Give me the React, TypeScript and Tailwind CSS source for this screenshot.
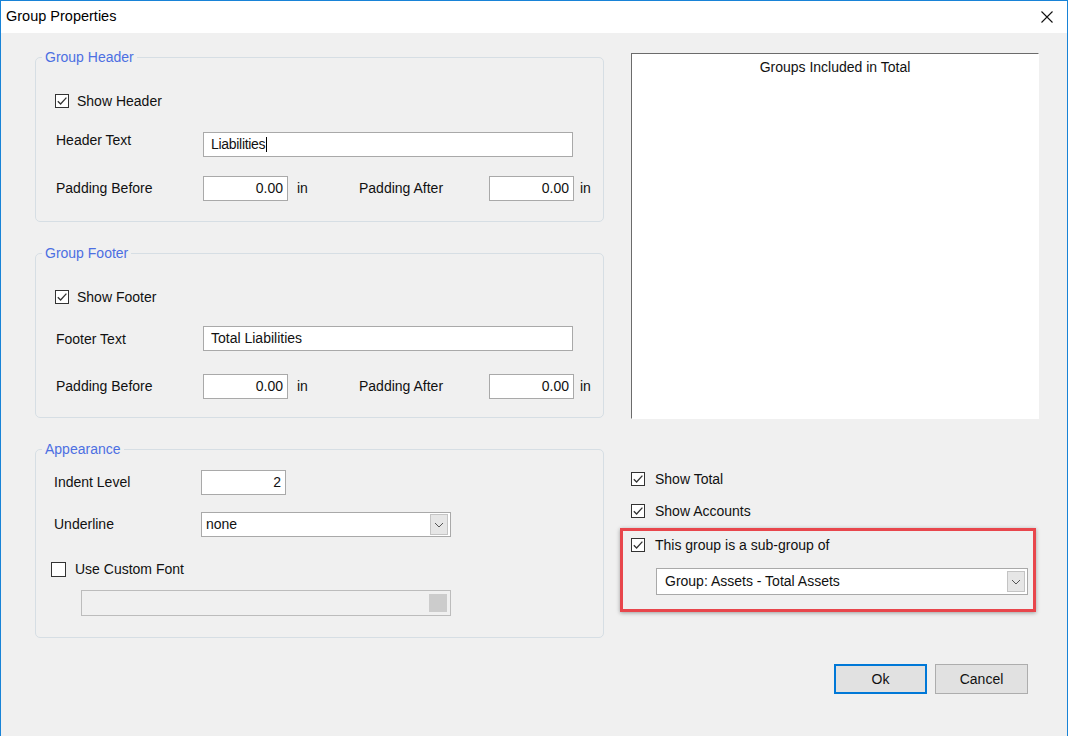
import React from "react";

function Check({ checked }: { checked: boolean }) {
  return (
    <span className="flex h-[14px] w-[14px] shrink-0 items-center justify-center border border-[#333333] bg-white">
      {checked && (
        <svg width="12" height="12" viewBox="0 0 12 12">
          <path d="M1.8 6.2 L4.6 9 L10.4 2.6" fill="none" stroke="#333333" strokeWidth="1.3" />
        </svg>
      )}
    </span>
  );
}

function Chevron() {
  return (
    <span className="mr-[2px] flex h-[21px] w-[18px] items-center justify-center border border-[#c4c4c4] bg-[#e6e6e6]">
      <svg width="10" height="6" viewBox="0 0 10 6">
        <path d="M1 1 L5 5 L9 1" fill="none" stroke="#555" strokeWidth="1" />
      </svg>
    </span>
  );
}

function NumBox({ value, w = "w-[85px]" }: { value: string; w?: string }) {
  return (
    <div className={`${w} flex h-[25px] items-center justify-end border border-[#a9a9a9] bg-white pr-[4px]`}>
      {value}
    </div>
  );
}

function Legend({ text, ml }: { text: string; ml: string }) {
  return <legend className={`${ml} px-[3px] leading-[16px] text-[#4c6fe2]`}>{text}</legend>;
}

function SectionGroup({
  title,
  checkLabel,
  textLabel,
  textValue,
  caret,
  gapB,
  gapC,
  labelMt,
}: {
  title: string;
  checkLabel: string;
  textLabel: string;
  textValue: string;
  caret?: boolean;
  gapB: string;
  gapC: string;
  labelMt: string;
}) {
  return (
    <fieldset className="h-[173px] rounded-[5px] border border-[#d6dee4] pl-[19px]">
      <Legend text={title} ml="-ml-[13px]" />
      <div className="mt-[24px] flex h-[24px] items-center gap-[8px]">
        <Check checked />
        <span>{checkLabel}</span>
      </div>
      <div className={`${gapB} flex h-[25px] items-start`}>
        <span className={`${labelMt} w-[148px] pl-[1px] leading-[16px]`}>{textLabel}</span>
        <div className="flex h-[25px] w-[370px] items-center border border-[#a9a9a9] bg-white pl-[7px]">
          <span className={caret ? "tracking-[-0.3px]" : ""}>{textValue}</span>
          {caret && <span className="ml-[1px] h-[15px] w-[1px] bg-black" />}
        </div>
      </div>
      <div className={`${gapC} flex h-[25px] items-center`}>
        <span className="w-[148px] pl-[1px]">Padding Before</span>
        <NumBox value="0.00" />
        <span className="ml-[9px] w-[62px]">in</span>
        <span className="w-[130px]">Padding After</span>
        <NumBox value="0.00" />
        <span className="ml-[6px]">in</span>
      </div>
    </fieldset>
  );
}

export default function App() {
  return (
    <div className="flex h-[736px] w-[1068px] flex-col border-x border-t border-[#1883d7] bg-[#f0f0f0] font-['Liberation_Sans',Arial,sans-serif] text-[14px] text-[#111]">
      <div className="flex h-[32px] shrink-0 items-center justify-between bg-white pl-[5px] pr-[14px]">
        <span className="text-[14.5px] text-black">Group Properties</span>
        <svg width="12" height="12" viewBox="0 0 12 12">
          <path d="M0.5 0.5 L11.5 11.5 M11.5 0.5 L0.5 11.5" stroke="#111" strokeWidth="1.1" />
        </svg>
      </div>

      <div className="flex flex-1 pt-[16px]">
        {/* left column */}
        <div className="ml-[34px] flex w-[569px] flex-col gap-[23px]">
          <SectionGroup
            title="Group Header"
            checkLabel="Show Header"
            textLabel="Header Text"
            textValue="Liabilities"
            caret
            gapB="mt-[19px]"
            gapC="mt-[19px]"
            labelMt="mt-0"
          />
          <SectionGroup
            title="Group Footer"
            checkLabel="Show Footer"
            textLabel="Footer Text"
            textValue="Total Liabilities"
            gapB="mt-[17px]"
            gapC="mt-[23px]"
            labelMt="mt-[5px]"
          />
          <fieldset className="h-[197px] rounded-[5px] border border-[#d6dee4] pl-[15px]">
            <Legend text="Appearance" ml="-ml-[9px]" />
            <div className="mt-[13px] flex h-[25px] items-center">
              <span className="w-[150px] pl-[3px]">Indent Level</span>
              <NumBox value="2" w="w-[85px]" />
            </div>
            <div className="mt-[17px] flex h-[25px] items-center">
              <span className="w-[150px] pl-[3px]">Underline</span>
              <div className="flex h-[25px] w-[250px] items-center justify-between border border-[#a9a9a9] bg-white pl-[4px]">
                <span>none</span>
                <Chevron />
              </div>
            </div>
            <div className="mt-[24px] flex h-[16px] items-center gap-[9px]">
              <span className="h-[15px] w-[15px] border border-[#333333] bg-white" />
              <span>Use Custom Font</span>
            </div>
            <div className="ml-[30px] mt-[13px] flex h-[26px] w-[370px] items-center justify-end border border-[#bcbcbc] bg-[#f0f0f0] pr-[3px]">
              <span className="h-[18px] w-[18px] bg-[#cccccc]" />
            </div>
          </fieldset>
        </div>

        {/* right column */}
        <div className="ml-[27px] flex w-[408px] flex-col">
          <div className="mt-[4px] flex h-[366px] justify-center border-l border-t border-l-[#6b6b6b] border-t-[#6b6b6b] border-r border-b border-r-white border-b-white bg-white pt-[3px]">
            <span>Groups Included in Total</span>
          </div>
          <div className="mt-[53px] flex h-[14px] items-center gap-[10px]">
            <Check checked />
            <span>Show Total</span>
          </div>
          <div className="mt-[18px] flex h-[14px] items-center gap-[10px]">
            <Check checked />
            <span>Show Accounts</span>
          </div>
          <div className="-ml-[11px] mt-[10px] flex h-[84px] w-[416px] flex-col border-[3px] border-[#e8464c] pl-[8px] pr-[5px] pt-[7px] shadow-[0_1px_4px_rgba(0,0,0,0.35)]">
            <div className="flex h-[14px] items-center gap-[10px]">
              <Check checked />
              <span>This group is a sub-group of</span>
            </div>
            <div className="ml-[25px] mt-[16px] flex h-[27px] items-center justify-between border border-[#a9a9a9] bg-white pl-[8px]">
              <span>Group: Assets - Total Assets</span>
              <Chevron />
            </div>
          </div>
          <div className="mt-[52px] flex justify-end gap-[8px] pr-[11px]">
            <div className="flex h-[30px] w-[93px] items-center justify-center border-2 border-[#0078d7] bg-[#e1e1e1]">
              Ok
            </div>
            <div className="flex h-[30px] w-[93px] items-center justify-center border border-[#adadad] bg-[#e1e1e1]">
              Cancel
            </div>
          </div>
        </div>
      </div>
    </div>
  );
}
